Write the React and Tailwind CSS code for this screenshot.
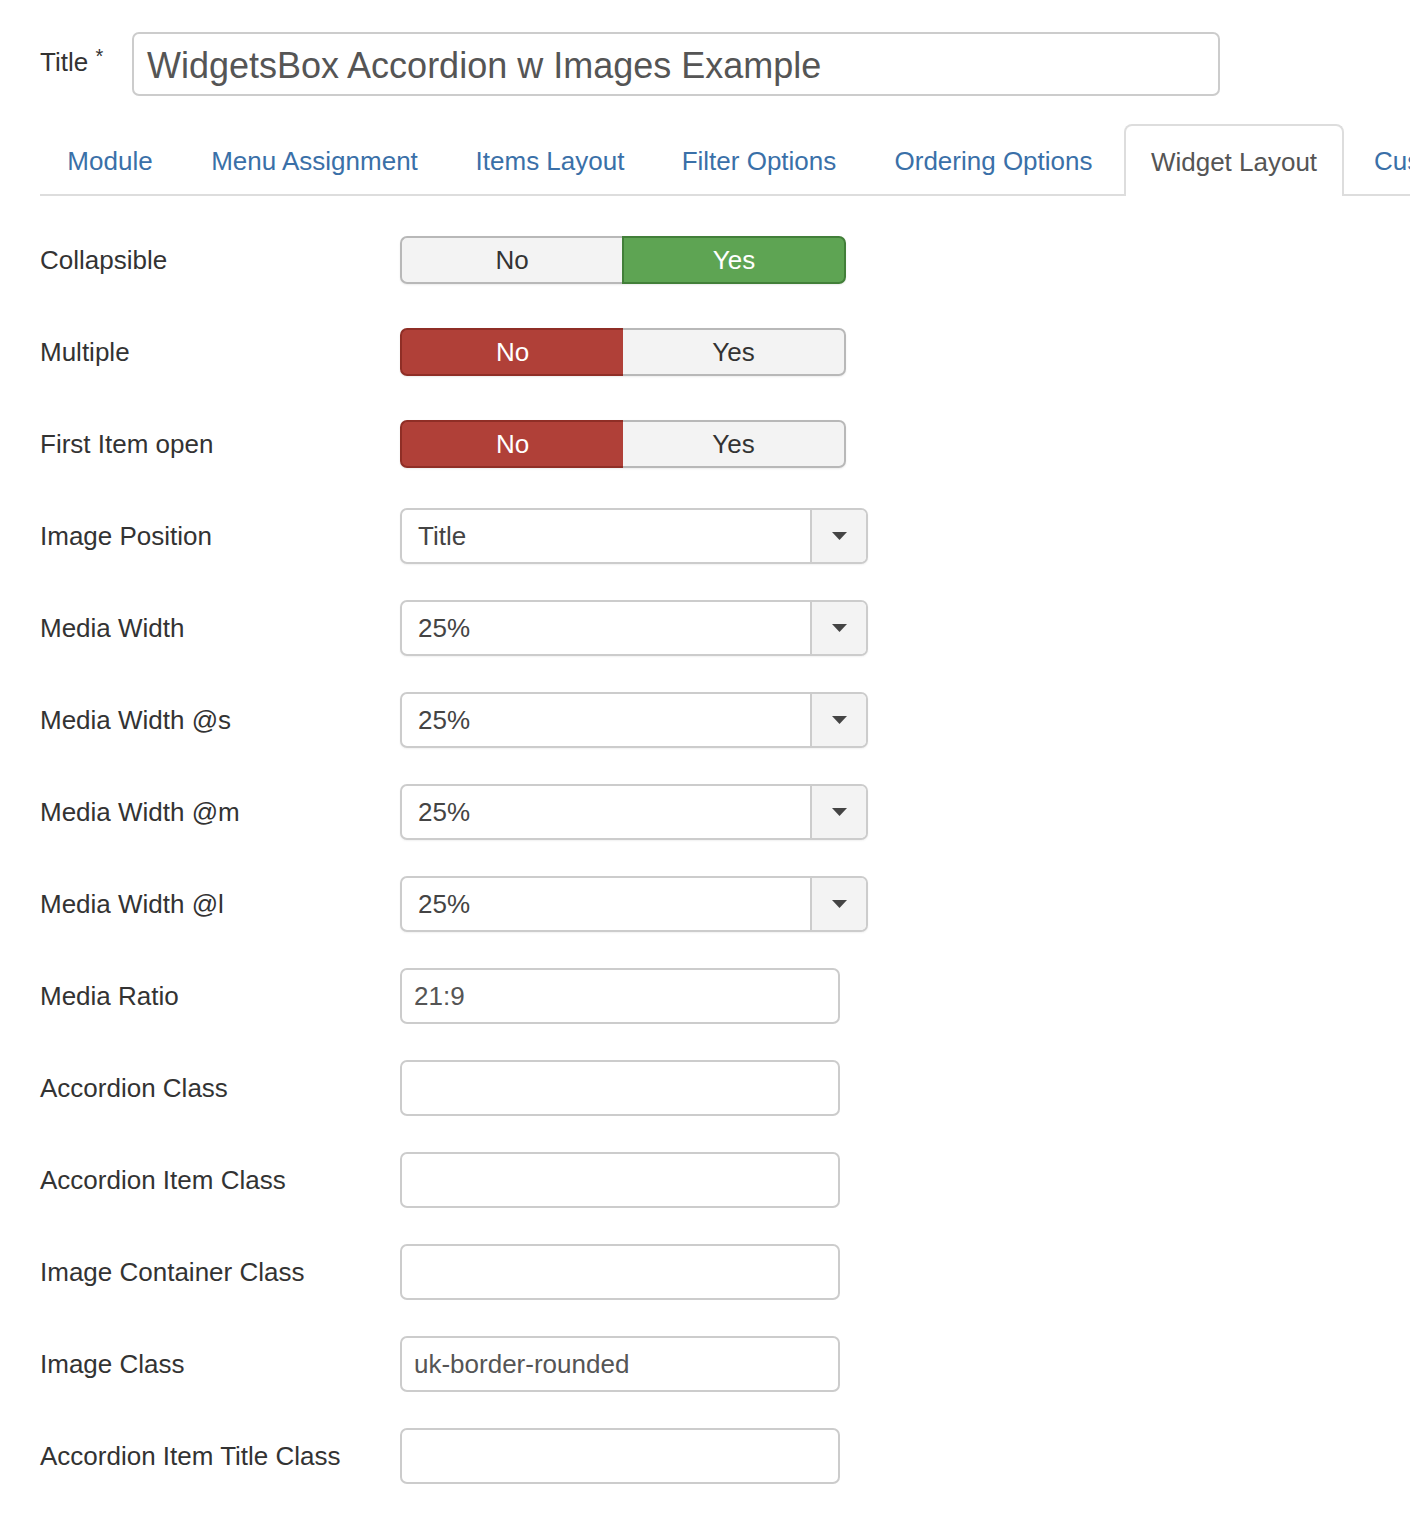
import React from "react";

const font = { fontFamily: '"Liberation Sans", Arial, sans-serif' };

function Toggle({ value }) {
  const yes = value === "yes";
  return (
    <div className="flex w-[446px] h-[48px] text-[26px] shadow-[0_1px_2px_rgba(0,0,0,0.08)] rounded-[7px]">
      <div
        className={
          yes
            ? "flex-1 flex items-center justify-center bg-[#f3f3f3] text-[#333] border-2 border-r-0 border-[#b8b8b8] rounded-l-[7px]"
            : "flex-1 flex items-center justify-center bg-[#b04038] text-white border-2 border-r-0 border-[#8f2e26] rounded-l-[7px]"
        }
      >
        No
      </div>
      <div
        className={
          yes
            ? "flex-1 flex items-center justify-center bg-[#5ea453] text-white border-2 border-[#427f39] rounded-r-[7px]"
            : "flex-1 flex items-center justify-center bg-[#f3f3f3] text-[#333] border-2 border-l-0 border-[#b8b8b8] rounded-r-[7px]"
        }
      >
        Yes
      </div>
    </div>
  );
}

function Select({ value }) {
  return (
    <div className="flex w-[468px] h-[56px] border-2 border-[#cccccc] rounded-[7px] bg-white text-[26px] text-[#444] shadow-[0_1px_2px_rgba(0,0,0,0.06)] overflow-hidden">
      <div className="flex-1 flex items-center pl-[16px]">{value}</div>
      <div className="w-[56px] flex items-center justify-center bg-[#f3f3f3] border-l-2 border-[#cccccc]">
        <svg width="15" height="8" viewBox="0 0 15 8">
          <path d="M0 0 L15 0 L7.5 8 Z" fill="#444" />
        </svg>
      </div>
    </div>
  );
}

function TextInput({ value }) {
  return (
    <div className="flex items-center w-[440px] h-[56px] border-2 border-[#cccccc] rounded-[7px] bg-white text-[26px] text-[#555] pl-[12px]">
      {value}
    </div>
  );
}

const rows = [
  ["Collapsible", "toggle", "yes"],
  ["Multiple", "toggle", "no"],
  ["First Item open", "toggle", "no"],
  ["Image Position", "select", "Title"],
  ["Media Width", "select", "25%"],
  ["Media Width @s", "select", "25%"],
  ["Media Width @m", "select", "25%"],
  ["Media Width @l", "select", "25%"],
  ["Media Ratio", "input", "21:9"],
  ["Accordion Class", "input", ""],
  ["Accordion Item Class", "input", ""],
  ["Image Container Class", "input", ""],
  ["Image Class", "input", "uk-border-rounded"],
  ["Accordion Item Title Class", "input", ""],
];

const tabs = [
  { t: "Module", w: "w-[140px]" },
  { t: "Menu Assignment", w: "w-[261px]" },
  { t: "Items Layout", w: "w-[202px]" },
  { t: "Filter Options", w: "w-[208px]" },
  { t: "Ordering Options", w: "w-[253px]" },
  { t: "Widget Layout", w: "w-[220px]", active: true },
  { t: "Custom", w: "w-[140px]", left: true },
];

export default function App() {
  return (
    <div className="w-[1410px] h-[1526px] bg-white overflow-hidden" style={font}>
      <div className="pl-[40px] pt-[32px]">
        <div className="flex items-center h-[64px]">
          <div className="w-[92px] text-[26px] text-[#333] self-start pt-[11px]">
            Title <span className="text-[20px] align-top relative top-[-2px]">*</span>
          </div>
          <div className="flex items-center w-[1088px] h-[64px] border-2 border-[#cccccc] rounded-[7px] pl-[13px] pt-[4px] text-[36px] text-[#555]">
            WidgetsBox Accordion w Images Example
          </div>
        </div>

        <div className="mt-[28px] flex items-end h-[72px] border-b-2 border-[#dddddd] whitespace-nowrap">
          {tabs.map((tab) =>
            tab.active ? (
              <div
                key={tab.t}
                className={`${tab.w} shrink-0 mr-[4px] mb-[-2px] h-[72px] flex items-center justify-center border-2 border-b-0 border-[#dddddd] rounded-t-[8px] bg-white text-[26px] text-[#555]`}
              >
                <span className="pt-[2px]">{tab.t}</span>
              </div>
            ) : (
              <div
                key={tab.t}
                className={`${tab.w} shrink-0 mr-[4px] h-[70px] flex items-center ${tab.left ? "justify-start pl-[26px]" : "justify-center"} text-[26px] text-[#3a70a8]`}
              >
                <span className="pt-[4px]">{tab.t}</span>
              </div>
            )
          )}
        </div>

        <div className="pt-[18px]">
          {rows.map(([label, type, val]) => (
            <div key={label} className="flex items-center h-[92px]">
              <div className="w-[360px] text-[26px] text-[#333]">{label}</div>
              {type === "toggle" && <Toggle value={val} />}
              {type === "select" && <Select value={val} />}
              {type === "input" && <TextInput value={val} />}
            </div>
          ))}
        </div>
      </div>
    </div>
  );
}
